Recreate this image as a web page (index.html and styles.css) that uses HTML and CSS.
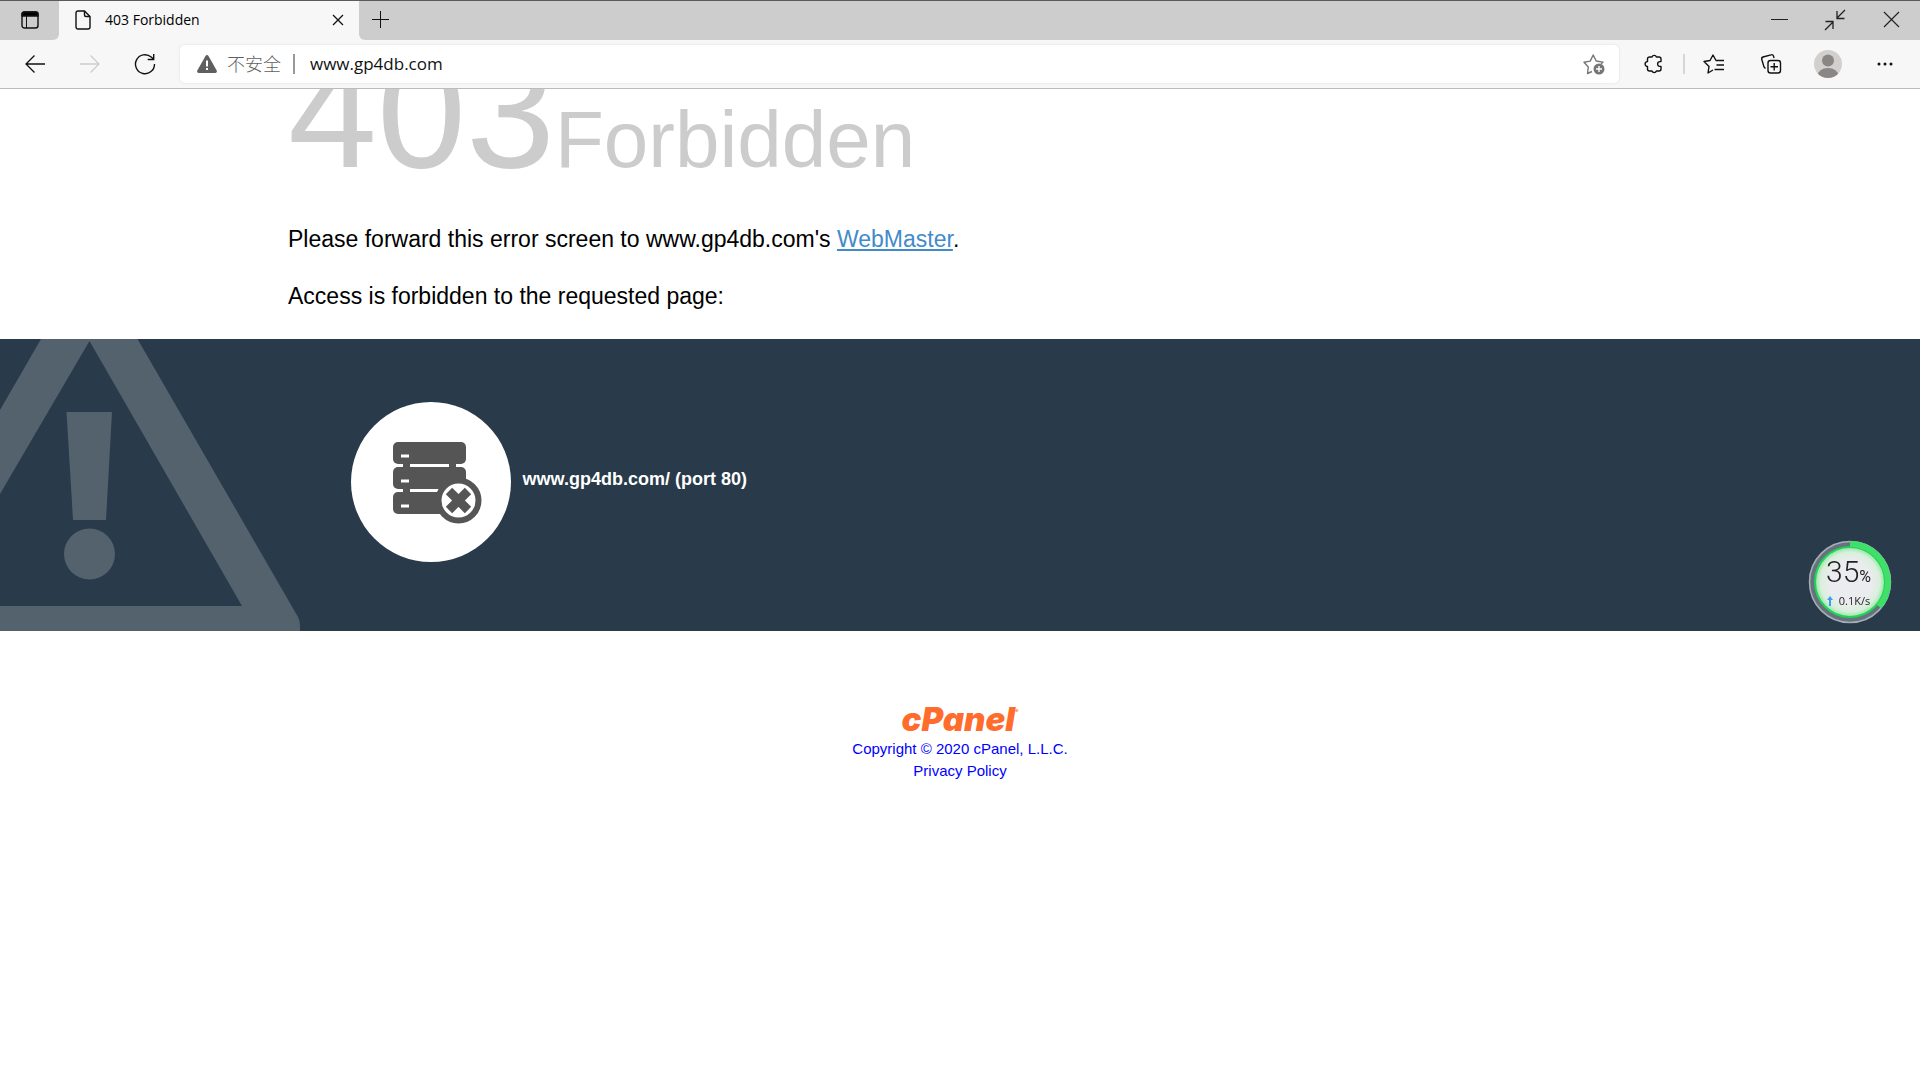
FILE: index.html
```
<!DOCTYPE html>
<html lang="en">
<head>
    <meta charset="UTF-8">
    <meta name="viewport" content="width=device-width, initial-scale=1.0">
    <title>403 Forbidden</title>
    <link rel="stylesheet" href="styles.css">
</head>
<body>

<header class="browser">
    <div class="tab-bar">
        <button class="tab-actions" aria-label="Tab actions">
            <svg width="18" height="18" viewBox="0 0 18 18" fill="none" stroke="#111" stroke-width="1.4"><path d="M1 5V3a2 2 0 0 1 2-2h12a2 2 0 0 1 2 2v2z" fill="#000"/><rect x="1" y="1" width="16" height="16" rx="2.5"/><path d="M5.5 5v12" stroke-width="1"/></svg>
        </button>
        <div class="tab">
            <svg width="16" height="20" viewBox="0 0 16 20" fill="none" stroke="#111" stroke-width="1.4"><path d="M3 1h6.5L15 6.5V17a2 2 0 0 1-2 2H3a2 2 0 0 1-2-2V3a2 2 0 0 1 2-2z"/><path d="M9.5 1v4a1.5 1.5 0 0 0 1.5 1.5h4"/></svg>
            <span class="tab-title">403 Forbidden</span>
            <button class="tab-close" aria-label="Close tab">
                <svg width="10" height="10" viewBox="0 0 10 10" stroke="#111" stroke-width="1.3"><path d="M0 0l10 10M10 0L0 10"/></svg>
            </button>
        </div>
        <button class="new-tab" aria-label="New tab">
            <svg width="17" height="17" viewBox="0 0 17 17" stroke="#111"><path d="M8.5 0v17M0 8.5h17"/></svg>
        </button>
        <div class="window-buttons">
            <button aria-label="Minimize">
                <svg width="17" height="17" viewBox="0 0 17 17" stroke="#222"><path d="M0 8.5h17"/></svg>
            </button>
            <button aria-label="Restore">
                <svg width="20" height="20" viewBox="0 0 20 20" fill="none" stroke="#222" stroke-width="1.3"><path d="M20 0l-8 8M12 1v7.500h7.500M0 20l8-8M.5 11.500H8V19"/></svg>
            </button>
            <button aria-label="Close">
                <svg width="15" height="15" viewBox="0 0 15 15" stroke="#222" stroke-width="1.2"><path d="M0 0l15 15M15 0L0 15"/></svg>
            </button>
        </div>
    </div>

    <div class="toolbar">
        <div class="nav-buttons">
            <button aria-label="Back">
                <svg width="20" height="18" viewBox="0 0 20 18" fill="none" stroke="#111" stroke-width="1.3"><path d="M20 9H1M9.500.5L1 9l8.500 8.500"/></svg>
            </button>
            <button aria-label="Forward" disabled>
                <svg width="20" height="18" viewBox="0 0 20 18" fill="none" stroke="#ccc" stroke-width="1.3"><path d="M0 9h19M10.500.5L19 9l-8.500 8.500"/></svg>
            </button>
            <button aria-label="Refresh">
                <svg width="22" height="22" viewBox="0 0 22 22" fill="none" stroke="#111" stroke-width="1.4"><path d="M20.500 11A9.500 9.500 0 1 1 17.200 4L19.500 6M19.700 1v5.500h-6"/></svg>
            </button>
        </div>
        <div class="address-bar">
            <svg width="20" height="18" viewBox="0 0 20 18"><path d="M8.500 1a1.700 1.700 0 0 1 3 0L19.700 15.500a1.700 1.700 0 0 1-1.500 2.500H1.800A1.700 1.700 0 0 1 .3 15.500z" fill="#5f5f5f"/><path d="M9 5.500h2v6H9zM9 13h2v2H9z" fill="#fff"/></svg>
            <span class="not-secure" lang="zh-CN">不安全</span>
            <input class="url" type="text" value="www.gp4db.com" aria-label="Address">
            <button aria-label="Add to favorites">
                <svg width="22" height="22" viewBox="0 0 22 22" fill="none" stroke="#767676" stroke-width="1.4" stroke-linejoin="round"><path d="M9 18.500L4.500 20.500 5.300 14 1 9.200l6.200-1.100L10.200 2l3 6 6.800 1.100-2 2"/><circle cx="16" cy="16" r="5.5" fill="#767676" stroke="none"/><path d="M16 13v6M13 16h6" stroke="#fff"/></svg>
            </button>
        </div>
        <div class="tool-buttons">
            <button aria-label="Extensions">
                <svg width="20" height="20" viewBox="0 0 20 20" fill="none" stroke="#111" stroke-width="1.4" stroke-linejoin="round"><path d="M5.500 3H8a2.300 2.300 0 0 1 4.400 0H15a2 2 0 0 1 2 2v2.600h-1a2.400 2.400 0 0 0 0 4.800h1V15a2 2 0 0 1-2 2h-2.600a2.300 2.300 0 0 1-4.400 0H5.500a2 2 0 0 1-2-2v-2.600a2.400 2.400 0 0 1 0-4.800V5a2 2 0 0 1 2-2z"/></svg>
            </button>
            <span class="divider"></span>
            <button aria-label="Favorites">
                <svg width="22" height="20" viewBox="0 0 22 20" fill="none" stroke="#111" stroke-width="1.4" stroke-linejoin="round"><path d="M10 16l-5 3 1-6.500L1 7.500l6-1L10 1l3 5.500h8M13.500 11H21M11.500 15.500H21"/></svg>
            </button>
            <button aria-label="Collections">
                <svg width="20" height="20" viewBox="0 0 20 20" fill="none" stroke="#111" stroke-width="1.4"><rect x="7" y="6.5" width="12.5" height="12.5" rx="2.5"/><path d="M13.200 9v7.500M9.500 12.800H17M4.500 14.500L3 13 .800 5.500A2 2 0 0 1 2 3L10 .800A2 2 0 0 1 12.500 2l.5 2"/></svg>
            </button>
            <button aria-label="Profile">
                <svg width="28" height="28" viewBox="0 0 28 28"><defs><clipPath id="avatar"><circle cx="14" cy="14" r="14"/></clipPath></defs><g clip-path="url(#avatar)"><path d="M0 0h28v28H0z" fill="#d2d0ce"/><circle cx="14" cy="10.5" r="6" fill="#8a8684"/><ellipse cx="14" cy="26" rx="10.5" ry="8" fill="#8a8684"/></g></svg>
            </button>
            <button aria-label="Settings and more">
                <svg width="16" height="4" viewBox="0 0 16 4" fill="#111"><circle cx="2" cy="2" r="1.5"/><circle cx="8" cy="2" r="1.5"/><circle cx="14" cy="2" r="1.5"/></svg>
            </button>
        </div>
    </div>
</header>

<main>
    <section class="container">
        <h1><span class="status-code">403</span><span class="status-reason">Forbidden</span></h1>
        <p>Please forward this error screen to www.gp4db.com's <a href="#">WebMaster</a>.</p>
        <p>Access is forbidden to the requested page:</p>
    </section>

    <section class="additional-info">
        <svg class="warning" width="300" height="292" viewBox="0 0 300 292" fill="#54626e"><path fill-rule="evenodd" d="M41 0H137.500L298 278q2 4 2 8v6H0v-25H242L89.500 2 0 155V71z"/><path d="M66.500 73H112l-6 108H73z"/><circle cx="89.5" cy="215" r="25.5"/></svg>
        <div class="info-server">
            <svg width="160" height="160" viewBox="0 0 160 160"><circle cx="80" cy="80" r="80" fill="#fff"/><g fill="#555"><rect x="42" y="40" width="73" height="22" rx="5"/><rect x="42" y="65" width="73" height="22" rx="5"/><rect x="42" y="90" width="73" height="22" rx="5"/><path d="M52 60h7v33h-7zM98 60h7v33h-7z"/></g><path d="M50 52.500h8v3h-8zM50 77.500h8v3h-8zM50 102.500h8v3h-8z" fill="#fff"/><circle cx="107.5" cy="98.5" r="20" fill="#fff" stroke="#555" stroke-width="6"/><path d="M98 89l19 19M117 89l-19 19" stroke="#555" stroke-width="9"/></svg>
            <strong>www.gp4db.com/ (port 80)</strong>
        </div>
    </section>
</main>

<footer>
    <a href="#">
        <span class="cpanel-logo">cPanel<sup>®</sup></span>
        Copyright © 2020 cPanel, L.L.C.
    </a>
    <a href="#">Privacy Policy</a>
</footer>

<aside class="speed-ball">
    <svg width="84" height="84" viewBox="0 0 84 84" fill="none"><defs><radialGradient id="ball"><stop offset="0.6" stop-color="#ebecef"/><stop offset="0.85" stop-color="#d9efdc"/><stop offset="1" stop-color="#8ce8a0"/></radialGradient></defs><circle cx="42" cy="42" r="38" stroke="#66727f" stroke-width="6"/><circle cx="42" cy="42" r="40.5" stroke="#a7afb5" stroke-width="1.5"/><circle cx="42" cy="42" r="35" fill="url(#ball)" stroke="#21d353" stroke-width="2"/><path d="M42 4A38 38 0 0 1 71 66.500" stroke="#3fe06a" stroke-width="6"/></svg>
    <div class="ball-text">
        <div class="percent">35<small>%</small></div>
        <div class="speed"><svg width="6" height="10" viewBox="0 0 6 10" fill="#3c9cfb"><path d="M3 0l3 4H4v6H2V4H0z"/></svg>0.1K/s</div>
    </div>
</aside>

</body>
</html>
```
FILE: styles.css
```
body {
    margin: 0;
    background: #fff;
    color: #000;
    font-family: "Liberation Sans", Arial, sans-serif;
}
button {
    display: flex;
    align-items: center;
    justify-content: center;
    padding: 0;
    border: none;
    background: none;
    cursor: pointer;
}
svg {
    display: block;
    flex-shrink: 0;
    overflow: visible;
}
.browser {
    position: relative;
    z-index: 1;
    background: #f7f7f7;
    border-bottom: 1px solid #bbb;
    font-family: "Open Sans", "Noto Sans CJK SC", sans-serif;
}
.tab-bar {
    display: flex;
    height: 40px;
    box-sizing: border-box;
    border-top: 1px solid #5d5a5a;
    background: #f7f7f7;
}
.tab-actions,
.tab,
.new-tab,
.window-buttons {
    box-sizing: border-box;
    padding-bottom: 2px;
}
.tab-actions {
    width: 59px;
    background: #cdcdcd;
    border-radius: 0 0 6px 0;
}
.tab {
    display: flex;
    align-items: center;
    width: 300px;
    padding: 0 16px 2px;
    background: #f7f7f7;
}
.tab-title {
    flex: 1;
    margin-left: 14px;
    font-size: 14px;
}
.new-tab {
    width: 42px;
    background: #cdcdcd;
    border-radius: 0 0 0 6px;
}
.window-buttons {
    display: flex;
    flex: 1;
    justify-content: flex-end;
    padding-right: 1px;
    background: #cdcdcd;
}
.window-buttons button {
    width: 56px;
}
.toolbar {
    display: flex;
    align-items: center;
    height: 48px;
}
.nav-buttons {
    display: flex;
    padding: 0 8px 0 7px;
}
.nav-buttons button {
    width: 55px;
    height: 40px;
}
.address-bar {
    display: flex;
    flex: 1;
    align-items: center;
    height: 38px;
    padding: 0 14px 0 17px;
    background: #fff;
    border-radius: 5px;
    box-shadow: 0 0 3px rgba(0, 0, 0, 0.1);
}
.not-secure {
    margin-left: 10px;
    padding-right: 12px;
    border-right: 2px solid #999;
    color: #5f5f5f;
    font-size: 18px;
    font-weight: 300;
    line-height: 20px;
}
.url {
    flex: 1;
    margin-left: 15px;
    padding: 0 0 2px;
    border: none;
    outline: none;
    background: none;
    color: #111;
    font: 17px "Open Sans", sans-serif;
}
.tool-buttons {
    display: flex;
    align-items: center;
    gap: 1px;
    padding: 0 7px;
}
.tool-buttons button {
    width: 56px;
    height: 40px;
}
.divider {
    width: 2px;
    height: 20px;
    background: #d6d6d6;
}
.container {
    padding: 0 15% 2px;
    font-size: 23px;
    line-height: 33px;
}
h1 {
    margin: -49px 0 0;
    color: #ccc;
    font-weight: normal;
    line-height: 144px;
}
.status-code {
    font-size: 160px;
}
.status-reason {
    font-size: 80px;
}
p {
    margin: 0 0 24px;
}
p a {
    color: #428bca;
}
.additional-info {
    position: relative;
    padding: 63px 18% 69px;
    background: #293a4a;
    color: #fff;
}
.warning {
    position: absolute;
    left: 0;
    bottom: 0;
}
.info-server {
    position: relative;
    display: flex;
    align-items: center;
    gap: 12px;
    padding-left: 5px;
    font-size: 18px;
}
.info-server strong {
    padding-bottom: 5px;
}
footer {
    display: flex;
    flex-direction: column;
    align-items: center;
    padding: 72px 0;
    font-size: 15px;
    line-height: 22px;
    text-align: center;
}
footer a {
    color: #00f;
    text-decoration: none;
}
.cpanel-logo {
    display: block;
    margin-bottom: 3px;
    color: #ff6c2c;
    font: italic 900 33px/32px Inter, sans-serif;
}
.cpanel-logo sup {
    font-size: 5px;
    vertical-align: 18px;
    line-height: 0;
}
.speed-ball {
    position: fixed;
    right: 28px;
    top: 540px;
}
.ball-text {
    position: absolute;
    inset: 0;
    display: flex;
    flex-direction: column;
    align-items: center;
    justify-content: center;
    padding-right: 3px;
    color: #222;
    font-family: "Open Sans", sans-serif;
}
.percent {
    font: 300 30px/32px Roboto, sans-serif;
}
.percent small {
    font-size: 16px;
    font-weight: 400;
}
.speed {
    display: flex;
    align-items: center;
    gap: 6px;
    font-size: 11px;
    line-height: 16px;
}
```
